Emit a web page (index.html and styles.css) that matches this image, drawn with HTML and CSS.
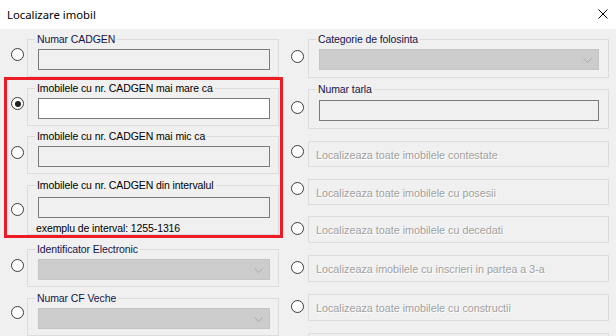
FILE: index.html
```html
<!DOCTYPE html>
<html lang="ro">
<head>
<meta charset="utf-8">
<title>Localizare imobil</title>
<link rel="stylesheet" href="styles.css">
</head>
<body>
<div class="window">
  <header class="titlebar">
    <span class="title">Localizare imobil</span>
    <svg class="close" width="10" height="10" viewBox="0 0 10 10"><path d="M0.5 0.5L9.5 9.5M9.5 0.5L0.5 9.5" stroke="#000" stroke-width="1" fill="none"/></svg>
  </header>
  <main class="content">
    <section class="col col-left">
      <div class="row l1">
        <span class="radio"></span>
        <div class="group g-left h38"><span class="cap navy">Numar CADGEN</span><div class="textbox tb-left"></div></div>
      </div>
      <div class="row l2">
        <span class="radio checked"></span>
        <div class="group g-left h38"><span class="cap">Imobilele cu nr. CADGEN mai mare ca</span><div class="textbox tb-left enabled"></div></div>
      </div>
      <div class="row l3">
        <span class="radio"></span>
        <div class="group g-left h38"><span class="cap">Imobilele cu nr. CADGEN mai mic ca</span><div class="textbox tb-left"></div></div>
      </div>
      <div class="row l4">
        <span class="radio"></span>
        <div class="group g-left h50"><span class="cap">Imobilele cu nr. CADGEN din intervalul</span><div class="textbox tb-left"></div><div class="hint">exemplu de interval: 1255-1316</div></div>
      </div>
      <div class="row l5">
        <span class="radio"></span>
        <div class="group g-left h38"><span class="cap navy">Identificator Electronic</span><div class="combo tb-left"><svg class="chev" width="9" height="5" viewBox="0 0 9 5"><path d="M0.5 0.5L4.5 4.5L8.5 0.5" stroke="#a8a8a8" fill="none"/></svg></div></div>
      </div>
      <div class="row l6">
        <span class="radio"></span>
        <div class="group g-left h38"><span class="cap navy">Numar CF Veche</span><div class="combo tb-left"><svg class="chev" width="9" height="5" viewBox="0 0 9 5"><path d="M0.5 0.5L4.5 4.5L8.5 0.5" stroke="#a8a8a8" fill="none"/></svg></div></div>
      </div>
    </section>
    <section class="col col-right">
      <div class="row r1">
        <span class="radio"></span>
        <div class="group g-right h39"><span class="cap navy">Categorie de folosinta</span><div class="combo tb-right"><svg class="chev" width="9" height="5" viewBox="0 0 9 5"><path d="M0.5 0.5L4.5 4.5L8.5 0.5" stroke="#a8a8a8" fill="none"/></svg></div></div>
      </div>
      <div class="row r2">
        <span class="radio"></span>
        <div class="group g-right h40"><span class="cap navy">Numar tarla</span><div class="textbox tb-right"></div></div>
      </div>
      <div class="row r3">
        <span class="radio"></span>
        <div class="box h26"><span class="dis">Localizeaza toate imobilele contestate</span></div>
      </div>
      <div class="row r4">
        <span class="radio"></span>
        <div class="box h26"><span class="dis">Localizeaza toate imobilele cu posesii</span></div>
      </div>
      <div class="row r5">
        <span class="radio"></span>
        <div class="box h27"><span class="dis">Localizeaza toate imobilele cu decedati</span></div>
      </div>
      <div class="row r6">
        <span class="radio"></span>
        <div class="box h27"><span class="dis">Localizeaza imobilele cu inscrieri in partea a 3-a</span></div>
      </div>
      <div class="row r7">
        <span class="radio"></span>
        <div class="box h27"><span class="dis">Localizeaza toate imobilele cu constructii</span></div>
      </div>
      <div class="row r8">
        <span class="radio"></span>
        <div class="box h27"></div>
      </div>
    </section>
    <div class="highlight"></div>
  </main>
</div>
</body>
</html>
```
FILE: styles.css
```css
* { box-sizing: border-box; }
html, body { margin: 0; padding: 0; }
body {
  width: 616px;
  height: 336px;
  overflow: hidden;
  background: #f0f0f0;
  font-family: "Liberation Sans", Arial, sans-serif;
  font-size: 10.5px;
  letter-spacing: -0.1px;
  color: #000;
}
.window { width: 616px; height: 336px; display: flex; flex-direction: column; }
.titlebar {
  height: 29px;
  flex: none;
  background: #fff;
  display: flex;
  align-items: center;
  justify-content: space-between;
  padding: 0 8px 1px 7px;
}
.title {
  font-family: "Noto Sans", "Open Sans", sans-serif;
  font-size: 11.3px;
  letter-spacing: 0;
  color: #000;
}
.close { display: block; margin-top: 0; }
.content {
  position: relative;
  flex: 1;
  display: flex;
  padding: 10px 0 0 11px;
  overflow: hidden;
}
.col { display: flex; flex-direction: column; }
.col-left { width: 268px; }
.col-right { margin-left: 12px; width: 318px; }
.row { display: flex; align-items: flex-start; flex: none; }
.radio {
  flex: none;
  width: 13px;
  height: 13px;
  border: 1px solid #3c3c3c;
  border-radius: 50%;
  background: #fff;
  position: relative;
}
.radio.checked::after {
  content: "";
  position: absolute;
  left: 2.5px; top: 2.5px;
  width: 6px; height: 6px;
  border-radius: 50%;
  background: #222;
}
.col-left .radio { margin-right: 3px; }
.col-right .radio { margin-right: 4px; }

.group {
  position: relative;
  border: 1px solid #dcdcdc;
  padding: 9px 0 0 10px;
}
.g-left { width: 252px; }
.g-right { width: 301px; }
.h38 { height: 38px; }
.h39 { height: 39px; }
.h40 { height: 40px; padding-top: 10px; }
.h50 { height: 50px; padding-top: 11px; }
.cap {
  position: absolute;
  top: -8px;
  left: 7px;
  padding: 0 2px;
  line-height: 14px;
  background: #f0f0f0;
  white-space: nowrap;
  color: #000;
}
.cap.navy { color: #14144a; }
.textbox {
  height: 21px;
  border: 1px solid #7a7a7a;
  background: #f0f0f0;
}
.textbox.enabled { background: #fff; }
.tb-left { width: 232px; }
.tb-right { width: 280px; }
.combo {
  height: 21px;
  border: 1px solid #c4c4c4;
  background: #cccccc;
  display: flex;
  align-items: center;
  justify-content: flex-end;
  padding-right: 6px;
}
.chev { display: block; margin-top: 1px; }
.hint { margin: 4px 0 0 -2px; line-height: 13px; }

.box {
  width: 301px;
  border: 1px solid #dcdcdc;
  display: flex;
  align-items: center;
  padding: 1px 0 0 7px;
}
.h26 { height: 26px; }
.h27 { height: 27px; }
.dis { color: #a0a0a0; text-shadow: 1px 1px 0 #fff; white-space: nowrap; font-size: 10.75px; letter-spacing: 0; }

/* left rows */
.l1 .radio { margin-top: 9px; }
.l2 { margin-top: 11px; }
.l2 .radio { margin-top: 9px; }
.l3 { margin-top: 10px; }
.l3 .radio { margin-top: 10px; }
.l4 { margin-top: 11px; }
.l4 .radio { margin-top: 18px; }
.l5 { margin-top: 14px; }
.l5 .radio { margin-top: 10px; }
.l6 { margin-top: 11px; }
.l6 .radio { margin-top: 8px; }

/* right rows */
.r1 .radio { margin-top: 11px; }
.r2 { margin-top: 11px; }
.r2 .radio { margin-top: 12px; }
.r3 { margin-top: 12px; }
.r3 .radio { margin-top: 4px; }
.r4 { margin-top: 12px; }
.r4 .radio { margin-top: 3px; }
.r5 { margin-top: 11px; }
.r5 .radio { margin-top: 6px; }
.r6 { margin-top: 12px; }
.r6 .radio { margin-top: 6px; }
.r7 { margin-top: 12px; }
.r7 .radio { margin-top: 6px; }
.r8 { margin-top: 12px; }
.r8 .radio { margin-top: 6px; }

.highlight {
  position: absolute;
  left: 4px;
  top: 48px;
  width: 279px;
  height: 161px;
  border: 3px solid #ed1c24;
  pointer-events: none;
}
```
